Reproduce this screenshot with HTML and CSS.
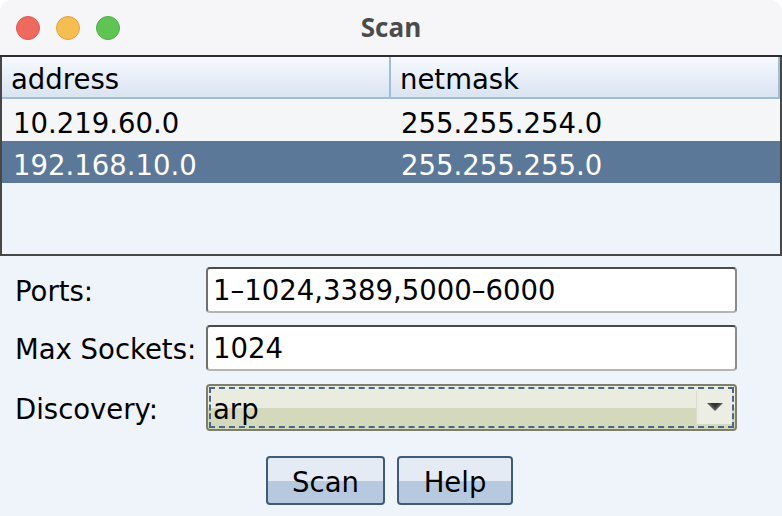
FILE: index.html
```html
<!DOCTYPE html>
<html>
<head>
<meta charset="utf-8">
<link rel="stylesheet" href="styles.css">
</head>
<body>
<div class="window">
  <div class="titlebar">
    <div class="lights">
      <span class="light red"></span>
      <span class="light yellow"></span>
      <span class="light green"></span>
    </div>
    <div class="title">Scan</div>
  </div>
  <div class="table">
    <div class="thead">
      <div class="th col1">address</div>
      <div class="th col2">netmask</div>
    </div>
    <div class="row">
      <div class="td col1">10.219.60.0</div>
      <div class="td col2">255.255.254.0</div>
    </div>
    <div class="row selected">
      <div class="td col1">192.168.10.0</div>
      <div class="td col2">255.255.255.0</div>
    </div>
  </div>
  <div class="form">
    <div class="frow">
      <label class="flabel">Ports:</label>
      <div class="field">1–1024,3389,5000–6000</div>
    </div>
    <div class="frow">
      <label class="flabel">Max Sockets:</label>
      <div class="field">1024</div>
    </div>
    <div class="frow frow-combo">
      <label class="flabel">Discovery:</label>
      <div class="combo">
        <div class="combo-inner">
          <span class="combo-text">arp</span>
          <span class="combo-btn"><svg width="16" height="10" viewBox="0 0 16 10"><path d="M0 0H16L8 8Z" fill="#555"/><path d="M3 0H13L8 5Z" fill="#333"/></svg></span>
        </div>
      </div>
    </div>
    <div class="buttons">
      <div class="btn btn-scan">Scan</div>
      <div class="btn btn-help">Help</div>
    </div>
  </div>
</div>
</body>
</html>
```
FILE: styles.css
```css
* { box-sizing: border-box; }
html, body { margin: 0; padding: 0; }
body { background: #ffffff; width: 782px; height: 516px; overflow: hidden; }
.window {
  width: 782px; height: 516px;
  background: #eff3fa;
  border-radius: 12px 12px 0 0;
  overflow: hidden;
  font-family: "DejaVu Sans", "Liberation Sans", sans-serif;
  font-size: 27.5px;
  color: #000;
  display: flex; flex-direction: column;
}
.titlebar {
  height: 57px; flex: none;
  background: #f6f6f8;
  border-bottom: 2px solid #2f2f2f;
  display: flex; align-items: center;
  position: relative;
}
.lights { display: flex; gap: 16px; padding-left: 16px; padding-top: 1px; }
.light { width: 24px; height: 24px; border-radius: 50%; display: block; }
.red { background: #ee6a5f; border: 1px solid #d65a50; }
.yellow { background: #f6be50; border: 1px solid #dea33f; }
.green { background: #5fc454; border: 1px solid #50ab46; }
.title {
  position: absolute; left: 0; right: 0; top: 12px;
  text-align: center;
  font-family: "Open Sans", "Liberation Sans", sans-serif;
  font-weight: 700; font-size: 26px; color: #4b4b4b;
  line-height: 30px;
}
.table {
  height: 199px; flex: none;
  border: 2px solid #474747; border-top: none;
  background: #eff3fa;
  display: flex; flex-direction: column;
}
.thead {
  height: 42px; flex: none;
  display: flex;
  background: linear-gradient(#f7f9ff, #d9e4f1);
  border-bottom: 2px solid #a1bcd6;
  border-right: 2px solid #a1bcd6;
}
.th { line-height: 40px; padding-left: 9px; padding-top: 2px; }
.col1 { width: 389px; flex: none; }
.thead .col1 { border-right: 2px solid #a1bcd6; }
.col2 { flex: 1; padding-left: 9px; }
.row { height: 42px; display: flex; background: #f5f6f8; }
.td { line-height: 44px; padding-left: 11px; padding-top: 2px; }
.row .col2 { padding-left: 10px; }
.row.selected { background: #5c7898; color: #fff; }
.form { padding: 11px 45px 0 15px; display: flex; flex-direction: column; }
.frow { display: flex; align-items: center; height: 46px; margin-bottom: 12px; }
.frow-combo { height: 47px; margin-top: 1px; margin-bottom: 13px; }
.flabel { width: 191px; flex: none; line-height: 46px; padding-top: 2px; }
.field {
  flex: 1; height: 46px;
  background: #fff;
  border: 2px solid #707070;
  border-top-color: #4a4a4a;
  border-bottom-color: #b4b4b4;
  border-right-color: #8a8a8a;
  border-radius: 4px;
  padding-left: 5px;
  line-height: 43px;
}
.combo {
  flex: 1; height: 47px;
  border: 2px solid #7c7e70;
  border-radius: 4px;
  background: linear-gradient(#e9ecdf 0 50%, #d5d9bb 50% 100%);
  padding: 1px;
}
.combo-inner {
  height: 100%;
  border: 2px dashed #4b6687;
  display: flex; align-items: stretch;
}
.combo-text { flex: 1; padding-left: 2px; line-height: 41px; }
.combo-btn {
  width: 36px; flex: none;
  background: #eceee4;
  border-left: 1px solid #d9dbcc;
  display: flex; align-items: center; justify-content: center;
  margin: 2px 0;
}
.buttons { display: flex; justify-content: center; gap: 12px; padding-top: 12px; padding-left: 27px; }
.btn {
  height: 49px;
  border: 2px solid #3f5b7a;
  border-radius: 4px;
  background: linear-gradient(#e4ebf5 0 52%, #b7c9df 52% 100%);
  text-align: center; line-height: 49px;
}
.btn-scan { width: 119px; }
.btn-help { width: 116px; }
```
